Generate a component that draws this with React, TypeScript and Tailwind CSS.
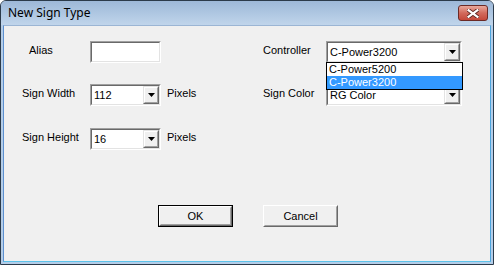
import React from "react";

const Arrow = () => (
  <svg width="7" height="4" viewBox="0 0 7 4" className="block">
    <path d="M0 0h7L3.5 4z" fill="#000" />
  </svg>
);

const DropButton = () => (
  <div className="flex h-full w-[16px] shrink-0 border border-t-[#e3e3e3] border-l-[#e3e3e3] border-b-[#696969] border-r-[#696969]">
    <div className="flex flex-1 items-center justify-center border border-t-white border-l-white border-b-[#a0a0a0] border-r-[#a0a0a0] bg-[#f0f0f0]">
      <Arrow />
    </div>
  </div>
);

const Sunken = ({ width, children }: { width: string; children?: React.ReactNode }) => (
  <div className={`flex h-[22px] ${width} border border-t-[#a0a0a0] border-l-[#a0a0a0] border-b-white border-r-white`}>
    <div className="flex flex-1 border border-t-[#696969] border-l-[#696969] border-b-[#e3e3e3] border-r-[#e3e3e3] bg-white">
      {children}
    </div>
  </div>
);

const Combo = ({ value, width }: { value: string; width: string }) => (
  <Sunken width={width}>
    <span className="flex-1 pl-[2px] leading-[18px]">{value}</span>
    <DropButton />
  </Sunken>
);

const Label = ({ text, className }: { text: string; className: string }) => (
  <span className={`self-start pt-[3px] leading-[13px] ${className}`}>{text}</span>
);

const Button = ({ text, primary }: { text: string; primary?: boolean }) => (
  <div className={`h-[22px] w-[75px] ${primary ? "border border-black" : ""}`}>
    <div className="flex h-full border border-t-white border-l-white border-b-[#696969] border-r-[#696969]">
      <div className="flex flex-1 items-center justify-center border border-t-[#f0f0f0] border-l-[#f0f0f0] border-b-[#a0a0a0] border-r-[#a0a0a0] bg-[#f0f0f0] leading-[13px]">
        {text}
      </div>
    </div>
  </div>
);

const CloseButton = () => (
  <div className="flex h-[16px] w-[30px] items-center justify-center rounded-[3px] border border-[#6b2a26] bg-gradient-to-b from-[#e8a89c] via-[#d26a5c] to-[#c4483a]">
    <svg width="12" height="9" viewBox="0 0 12 9">
      <path d="M1.5 1.2L10.5 7.8M10.5 1.2L1.5 7.8" stroke="#5a2420" strokeWidth="4" strokeLinecap="square" />
      <path d="M1.5 1.2L10.5 7.8M10.5 1.2L1.5 7.8" stroke="#fff" strokeWidth="2.2" strokeLinecap="square" />
    </svg>
  </div>
);

export default function App() {
  return (
    <div className="flex h-[265px] w-[494px] flex-col rounded-t-[6px] border border-[#2b3a4a] bg-[#b4cde8]">
      <div className="flex h-[24px] shrink-0 items-center justify-between rounded-t-[5px] bg-gradient-to-b from-[#9db8d8] to-[#c0d5eb] pl-[7px] pr-[5px]">
        <span className="font-['Noto_Sans',sans-serif] text-[12px] leading-[16px] text-black">New Sign Type</span>
        <CloseButton />
      </div>
      <div className="flex flex-1 px-[2px] pb-[2px]">
        <div className="relative flex flex-1 flex-col border border-t-[#9bb5d4] border-l-[#5c8fcf] border-r-[#4aa3dc] border-b-[#5cc3ea] bg-[#f0f0f0] pt-[15px] font-['Liberation_Sans',Arial,sans-serif] text-[11px] text-black">
          <div className="flex h-[22px]">
            <Label text="Alias" className="w-[86px] pl-[25px]" />
            <Sunken width="w-[71px]" />
            <div className="w-[102px]" />
            <Label text="Controller" className="w-[63px]" />
            <div className="relative">
              <Combo value="C-Power3200" width="w-[136px]" />
              <div className="absolute left-0 top-[21px] z-10 w-[137px] border border-black bg-white">
                <div className="h-[13px] pl-[2px] leading-[13px]">C-Power5200</div>
                <div className="h-[13px] bg-[#3399ff] pl-[2px] leading-[13px] text-white">C-Power3200</div>
              </div>
            </div>
          </div>
          <div className="mt-[21px] flex h-[22px]">
            <Label text="Sign Width" className="w-[86px] pl-[18px]" />
            <Combo value="112" width="w-[71px]" />
            <Label text="Pixels" className="w-[102px] pl-[6px]" />
            <Label text="Sign Color" className="w-[63px]" />
            <Combo value="RG Color" width="w-[136px]" />
          </div>
          <div className="mt-[22px] flex h-[22px]">
            <Label text="Sign Height" className="w-[86px] pl-[18px]" />
            <Combo value="16" width="w-[71px]" />
            <Label text="Pixels" className="pl-[6px]" />
          </div>
          <div className="mt-[55px] flex gap-[30px] pl-[154px]">
            <Button text="OK" primary />
            <Button text="Cancel" />
          </div>
        </div>
      </div>
    </div>
  );
}
